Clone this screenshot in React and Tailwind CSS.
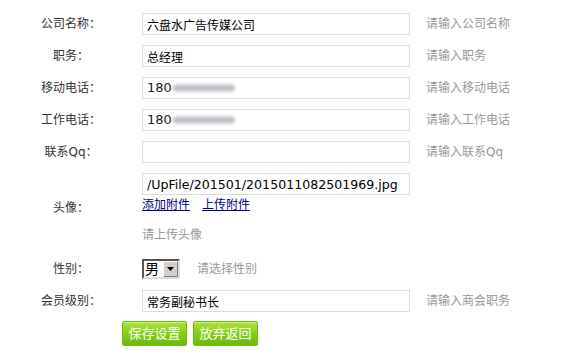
import { useState } from "react";

// 会员资料编辑表单
const font = "font-['DejaVu_Sans','Noto_Sans_CJK_SC',sans-serif]";

const Row = ({ label, hint, children, className = "" }) => (
  <div className={`flex items-center py-[5px] ${className}`}>
    <div className="w-[142px] text-center text-[12px] text-[#333]">{label}</div>
    <div className="w-[268px]">{children}</div>
    {hint && <div className="ml-[16px] text-[12px] text-[#999]">{hint}</div>}
  </div>
);

const TextBox = ({ value, onChange, className = "" }) => (
  <input
    type="text"
    value={value}
    onChange={(e) => onChange(e.target.value)}
    className={`block w-[268px] h-[22px] border border-[#dcdcdc] bg-white px-[4px] text-black outline-none ${className}`}
  />
);

// 手机号码打码
const PhoneBox = () => (
  <div className="flex items-center w-[268px] h-[22px] border border-[#dcdcdc] bg-white px-[4px] text-[13px] text-[#222]">
    <span>180</span>
    <span className="ml-[1px] h-[8px] w-[62px] rounded-full bg-gradient-to-b from-[#dcdcdc] via-[#b4b4c4] to-[#dcdcdc] blur-[1.5px]"></span>
  </div>
);

const GreenButton = ({ children }) => (
  <button className="w-[65px] h-[25px] rounded-[2px] border border-[#74b816] bg-gradient-to-b from-[#a8e43a] via-[#86d017] to-[#6cb80c] text-[13px] text-white shadow-[inset_0_1px_0_#c6f27a]">
    {children}
  </button>
);

export default function App() {
  const [form, setForm] = useState({
    company: "六盘水广告传媒公司",
    job: "总经理",
    qq: "",
    avatar: "/UpFile/201501/2015011082501969.jpg",
    level: "常务副秘书长",
  });
  const set = (k) => (v) => setForm({ ...form, [k]: v });

  return (
    <div className={`w-[571px] h-[359px] bg-white pt-[8px] ${font}`}>
      <Row label="公司名称：" hint="请输入公司名称">
        <TextBox value={form.company} onChange={set("company")} className="text-[12px]" />
      </Row>
      <Row label="职务：" hint="请输入职务">
        <TextBox value={form.job} onChange={set("job")} className="text-[12px]" />
      </Row>
      <Row label="移动电话：" hint="请输入移动电话">
        <PhoneBox />
      </Row>
      <Row label="工作电话：" hint="请输入工作电话">
        <PhoneBox />
      </Row>
      <Row label="联系Qq：" hint="请输入联系Qq">
        <TextBox value={form.qq} onChange={set("qq")} className="text-[12px]" />
      </Row>

      {/* 头像 */}
      <Row label="头像：" className="pb-[10px]">
        <TextBox value={form.avatar} onChange={set("avatar")} className="text-[12.6px]" />
        <div className="mt-[2px] flex gap-[12px] text-[12px] leading-[16px] text-[#000080]">
          <a className="underline cursor-pointer">添加附件</a>
          <a className="underline cursor-pointer">上传附件</a>
        </div>
        <div className="mt-[14px] text-[12px] leading-[16px] text-[#999]">请上传头像</div>
      </Row>

      {/* 性别 */}
      <div className="flex items-center h-[32px]">
        <div className="w-[142px] text-center text-[12px] text-[#333]">性别：</div>
        <div className="flex h-[20px] w-[38px] border-2 border-t-[#555] border-l-[#555] border-b-[#ddd] border-r-[#ddd] bg-white">
          <span className="flex-1 pl-[1px] text-[14px] leading-[16px] text-black">男</span>
          <span className="flex items-center justify-center w-[15px] bg-[#d4d0c8] border border-t-white border-l-white border-b-[#808080] border-r-[#808080]">
            <svg width="7" height="4" viewBox="0 0 7 4"><path d="M0 0h7L3.5 4z" fill="#000" /></svg>
          </span>
        </div>
        <div className="ml-[17px] text-[12px] text-[#999]">请选择性别</div>
      </div>

      <Row label="会员级别：" hint="请输入商会职务">
        <TextBox value={form.level} onChange={set("level")} className="text-[12px]" />
      </Row>

      <div className="flex gap-[6px] pl-[122px] pt-[4px]">
        <GreenButton>保存设置</GreenButton>
        <GreenButton>放弃返回</GreenButton>
      </div>
    </div>
  );
}
